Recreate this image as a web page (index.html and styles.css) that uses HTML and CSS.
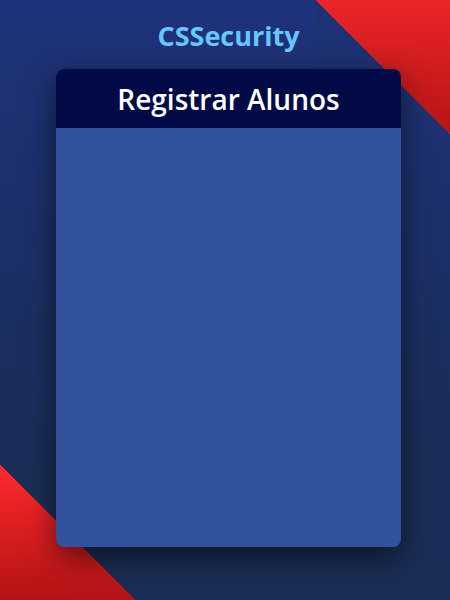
FILE: index.html
```html
<!DOCTYPE html>
<html lang="pt-BR">
<head>
    <meta charset="UTF-8">
    <meta name="viewport" content="width=device-width, initial-scale=1.0">
    <title>CSSecurity - Registrar Alunos</title>
    <link rel="stylesheet" href="styles.css">
</head>
<body>
    <h1 class="brand">CSSecurity</h1>
    <div class="card">
        <div class="card-header">
            <h2>Registrar Alunos</h2>
        </div>
        <div class="card-body">
            <!-- formulario de registro -->
        </div>
    </div>
</body>
</html>
```

FILE: styles.css
```css
html {
    height: 100%;
}
body {
    font-family: 'Open Sans', 'Lato', sans-serif;
    margin: 0;
    min-height: 100%;
    box-sizing: border-box;
    padding: 17px 49px 0 56px;
    background:
        linear-gradient(to top right, #1e3172 50%, transparent 50%) right top / 135px 135px no-repeat,
        linear-gradient(#ea2629, #b61416) right top / 135px 135px no-repeat,
        linear-gradient(to bottom left, #1b2d55 50%, transparent 50%) left bottom / 135px 135px no-repeat,
        linear-gradient(#ff2a2c, #b21314) left bottom / 135px 135px no-repeat,
        linear-gradient(#1f327b, #1b2d57 75%, #1b2d55);
}
.brand {
    margin: 0;
    text-align: center;
    color: #66c6ff;
    font-size: 27px;
    font-weight: 700;
    line-height: 38px;
}
.card {
    margin-top: 14px;
    height: 478px;
    display: flex;
    flex-direction: column;
    border-radius: 8px;
    overflow: hidden;
    background: #32539b;
    box-shadow: 0 10px 30px rgba(0, 0, 0, 0.55);
}
.card-header {
    background: #020a46;
    height: 59px;
    display: flex;
    align-items: center;
    justify-content: center;
}
.card-header h2 {
    margin: 0;
    color: #ffffff;
    font-size: 28px;
    font-weight: 600;
}
.card-body {
    flex: 1;
}
```
